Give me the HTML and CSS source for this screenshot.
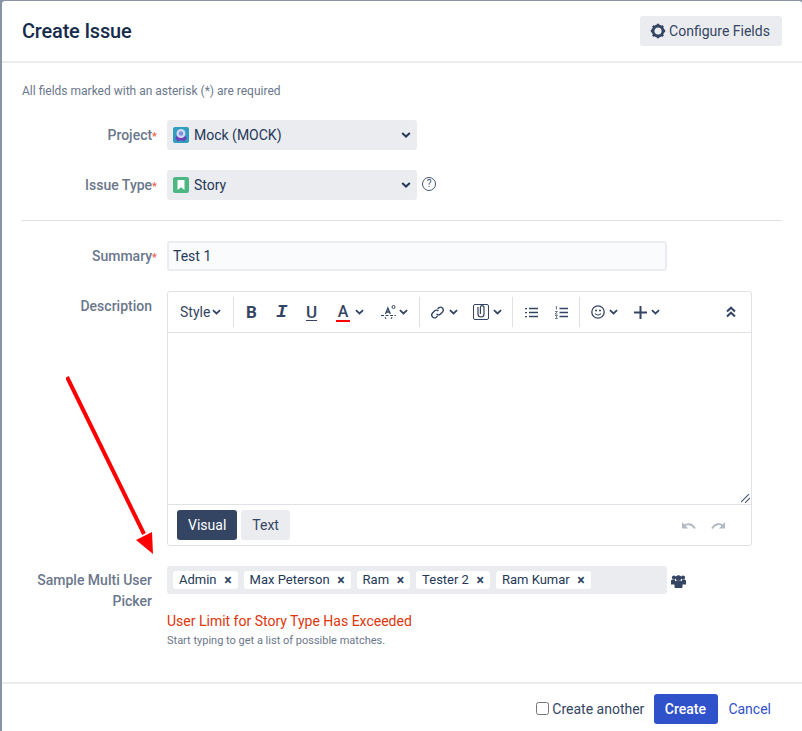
FILE: index.html
```html
<!DOCTYPE html>
<html>
<head>
    <title>Create Issue</title>
    <link rel="stylesheet" href="styles.css">
</head>
<body>
    <div class="dialog">
        <div class="dialog-header">
            <h2>Create Issue</h2>
            <button class="config-btn" type="button">
                <svg width="16" height="16" viewBox="0 0 16 16"><circle cx="8" cy="8" r="5" fill="none" stroke="#344563" stroke-width="2.8"/><path d="M6.800 .8h2.400v2.600H6.800zM6.800 12.600h2.400v2.600H6.800zM.8 6.800h2.600v2.400H.8zM12.600 6.800h2.600v2.400h-2.600zM2 3.700L3.700 2l1.800 1.800L3.800 5.500zM10.500 12.200l1.700-1.700 1.800 1.800-1.700 1.700zM2 12.300l1.800-1.800 1.700 1.700L3.700 14zM10.500 3.800L12.300 2 14 3.700l-1.800 1.800z" fill="#344563"/></svg>
                Configure Fields
            </button>
        </div>

        <div class="dialog-body">
            <p class="required-note">All fields marked with an asterisk (*) are required</p>

            <div class="form-row project-row">
                <label>Project<span class="req">*</span></label>
                <div class="fake-select">
                    <svg class="type-icon" width="16" height="16" viewBox="0 0 16 16"><rect width="16" height="16" rx="2" fill="#2f9fbd"/><path d="M2.500 11c0-2 2-3 5.500-3s5.500 1 5.500 3c0 1.500-1 2.500-2 2.500v1h-1.500v-1h-4v1H4.500v-1c-1 0-2-1-2-2.500z" fill="#6b45b5"/><circle cx="8" cy="6.500" r="4.500" fill="#cfd8f5"/><circle cx="8" cy="6.500" r="2.200" fill="#7f8fd8"/></svg>
                    <span>Mock (MOCK)</span>
                    <svg class="caret" width="10" height="6" viewBox="0 0 10 6"><path d="M1.200 1l3.800 3.600L8.800 1" fill="none" stroke="#253858" stroke-width="2"/></svg>
                </div>
            </div>

            <div class="form-row type-row">
                <label>Issue Type<span class="req">*</span></label>
                <div class="fake-select">
                    <svg class="type-icon" width="16" height="16" viewBox="0 0 16 16"><rect width="16" height="16" rx="2" fill="#4cb782"/><path d="M4.500 3h7v10L8 10.200 4.500 13z" fill="#fff"/></svg>
                    <span>Story</span>
                    <svg class="caret" width="10" height="6" viewBox="0 0 10 6"><path d="M1.200 1l3.800 3.600L8.800 1" fill="none" stroke="#253858" stroke-width="2"/></svg>
                </div>
                <span class="help-icon">?</span>
            </div>

            <hr class="divider">

            <div class="form-row summary-row">
                <label>Summary<span class="req">*</span></label>
                <input class="text-input" type="text" value="Test 1">
            </div>

            <div class="form-row description-row">
                <label class="label-top">Description</label>
                <div class="editor">
                    <div class="toolbar">
                        <div class="tool-group style-group">
                            <span class="style-btn">Style</span>
                            <svg class="chev" width="9" height="6" viewBox="0 0 10 6"><path d="M1 1l4 3.600L9 1" fill="none" stroke="#344563" stroke-width="2"/></svg>
                        </div>
                        <div class="tool-group format-group">
                            <span class="tool bold">B</span>
                            <span class="tool italic">I</span>
                            <span class="tool under">U</span>
                            <span class="tool color">A</span>
                            <svg class="chev color-chev" width="9" height="6" viewBox="0 0 10 6"><path d="M1 1l4 3.600L9 1" fill="none" stroke="#344563" stroke-width="2"/></svg>
                            <svg class="more-fmt" width="16" height="16" viewBox="0 0 16 16"><path d="M4.500 10l2.400-6 2.400 6M5.500 8h3" fill="none" stroke="#344563" stroke-width="1.300"/><circle cx="12.500" cy="3" r="1.500" fill="none" stroke="#344563"/><path d="M0 11.500h15" stroke="#344563" stroke-dasharray="3 1.500"/><path d="M4 13l1 2M11 13l-1 2" stroke="#344563"/></svg>
                            <svg class="chev" width="9" height="6" viewBox="0 0 10 6"><path d="M1 1l4 3.600L9 1" fill="none" stroke="#344563" stroke-width="2"/></svg>
                        </div>
                        <div class="tool-group link-group">
                            <svg width="15" height="15" viewBox="0 0 16 16"><path d="M7 9.500a3 3 0 0 0 4.200 0l2.300-2.300a3 3 0 0 0-4.200-4.200L8 4.300M9 6.500a3 3 0 0 0-4.200 0L2.500 8.800A3 3 0 0 0 6.700 13L8 11.700" fill="none" stroke="#344563" stroke-width="1.500"/></svg>
                            <svg class="chev" width="9" height="6" viewBox="0 0 10 6"><path d="M1 1l4 3.600L9 1" fill="none" stroke="#344563" stroke-width="2"/></svg>
                            <svg class="attach" width="16" height="16" viewBox="0 0 16 16"><rect x=".5" y=".5" width="15" height="15" rx="1.500" fill="none" stroke="#344563"/><path d="M5 3v7a3 3 0 0 0 6 0V3.500a1.800 1.800 0 0 0-3.600 0V10" fill="none" stroke="#344563" stroke-width="1.200"/></svg>
                            <svg class="chev" width="9" height="6" viewBox="0 0 10 6"><path d="M1 1l4 3.600L9 1" fill="none" stroke="#344563" stroke-width="2"/></svg>
                        </div>
                        <div class="tool-group list-group">
                            <svg width="13" height="11" viewBox="0 0 13 11"><path d="M4 1.500h9M4 5.500h9M4 9.500h9" stroke="#344563" stroke-width="1.500"/><path d="M0 1h2v1.200H0zM0 5h2v1.200H0zM0 9h2v1.200H0z" fill="#344563"/></svg>
                            <svg width="13" height="13" viewBox="0 0 13 13"><path d="M4.500 2.500H13M4.500 6.500H13M4.500 10.500H13" stroke="#344563" stroke-width="1.500"/><path d="M.5 1L1.500.5v3M0 5.500h2.500L0 8h2.500M0 9.500h2.500L1 11l1.500 1.500H0" fill="none" stroke="#344563" stroke-width=".7"/></svg>
                        </div>
                        <div class="tool-group insert-group">
                            <svg width="14" height="14" viewBox="0 0 14 14"><circle cx="7" cy="7" r="6.200" fill="none" stroke="#344563" stroke-width="1.300"/><circle cx="5" cy="5.500" r="1" fill="#344563"/><circle cx="9" cy="5.500" r="1" fill="#344563"/><path d="M4 8.500c1.500 2 4.500 2 6 0" fill="none" stroke="#344563" stroke-width="1.100"/></svg>
                            <svg class="chev" width="9" height="6" viewBox="0 0 10 6"><path d="M1 1l4 3.600L9 1" fill="none" stroke="#344563" stroke-width="2"/></svg>
                            <svg class="plus" width="13" height="13" viewBox="0 0 13 13"><path d="M6.500 0v13M0 6.500h13" stroke="#344563" stroke-width="2"/></svg>
                            <svg class="chev" width="9" height="6" viewBox="0 0 10 6"><path d="M1 1l4 3.600L9 1" fill="none" stroke="#344563" stroke-width="2"/></svg>
                        </div>
                        <svg class="collapse" width="10" height="12" viewBox="0 0 10 12"><path d="M1 5.500l4-3.800 4 3.800M1 10.500l4-3.800 4 3.800" fill="none" stroke="#344563" stroke-width="2"/></svg>
                    </div>
                    <div class="edit-area">
                        <svg class="grip" width="9" height="9" viewBox="0 0 9 9"><path d="M0 8l8-8M4 9l5-5" stroke="#505f79" stroke-width="1.100"/></svg>
                    </div>
                    <div class="editor-foot">
                        <span class="mode-btn active">Visual</span>
                        <span class="mode-btn">Text</span>
                        <div class="history">
                            <svg width="15" height="9" viewBox="0 0 15 9"><path d="M14 7.500C11 2.500 6 2 2.500 5" fill="none" stroke="#b3bac5" stroke-width="1.800"/><path d="M1 1v6.500h6z" fill="#b3bac5"/></svg>
                            <svg width="15" height="9" viewBox="0 0 15 9"><path d="M1 7.500C4 2.500 9 2 12.500 5" fill="none" stroke="#b3bac5" stroke-width="1.800"/><path d="M14 1v6.500H8z" fill="#b3bac5"/></svg>
                        </div>
                    </div>
                </div>
            </div>

            <div class="form-row picker-row">
                <label class="label-top">Sample Multi User Picker</label>
                <div class="picker-col">
                    <div class="picker-line">
                        <div class="picker">
                            <span class="chip">Admin<i>×</i></span>
                            <span class="chip">Max Peterson<i>×</i></span>
                            <span class="chip">Ram<i>×</i></span>
                            <span class="chip">Tester 2<i>×</i></span>
                            <span class="chip">Ram Kumar<i>×</i></span>
                        </div>
                        <svg class="people" width="15" height="14" viewBox="0 0 15 14"><circle cx="3" cy="3.500" r="2.100" fill="#344563"/><circle cx="12" cy="3.500" r="2.100" fill="#344563"/><circle cx="7.500" cy="4" r="2.800" fill="#344563"/><path d="M0 7c0-1 1-1.500 2-1.500h2v5H0zM11 5.500h2c1 0 2 .5 2 1.500v3.500h-4z" fill="#344563"/><path d="M3.500 9c0-1.500 1-2.500 2-2.500h4c1 0 2 1 2 2.500v4c0 .5-.5 1-1 1h-6c-.5 0-1-.5-1-1z" fill="#344563"/></svg>
                    </div>
                    <div class="field-error">User Limit for Story Type Has Exceeded</div>
                    <div class="field-hint">Start typing to get a list of possible matches.</div>
                </div>
            </div>
        </div>

        <div class="dialog-footer">
            <label class="create-another"><input type="checkbox">Create another</label>
            <button class="create-btn" type="button">Create</button>
            <a class="cancel-link" href="#">Cancel</a>
        </div>

        <svg class="arrow" width="110" height="190" viewBox="0 0 110 190">
            <path d="M1 1L78 158" stroke="#ff0000" stroke-width="4" fill="none"/>
            <path d="M87 178L70 164L86 156z" fill="#ff0000"/>
        </svg>
    </div>
</body>
</html>
```

FILE: styles.css
```css
html, body {
    height: 100%;
}
body {
    margin: 0;
    padding: 1px 0 0 2px;
    box-sizing: border-box;
    height: 731px;
    overflow: hidden;
    background-color: #8993a4;
    font-family: Roboto, sans-serif;
    font-size: 14px;
    color: #253858;
}
.dialog {
    position: relative;
    height: 730px;
    background-color: white;
    border-radius: 3px 3px 0 0;
    display: flex;
    flex-direction: column;
}
.dialog-header {
    height: 60px;
    flex: none;
    display: flex;
    align-items: center;
    justify-content: space-between;
    padding: 0 20px;
    border-bottom: 2px solid #ebecf0;
}
.dialog-header h2 {
    margin: 0;
    font-size: 20px;
    font-weight: 500;
    letter-spacing: -0.2px;
    color: #172b4d;
}
.config-btn {
    width: 142px;
    height: 30px;
    border: none;
    border-radius: 3px;
    background-color: #ebecf0;
    color: #344563;
    font-family: inherit;
    font-size: 14px;
    display: flex;
    align-items: center;
    justify-content: center;
    gap: 3px;
    padding: 0 2px 0 0;
}
.dialog-body {
    flex: 1;
    padding: 0 20px;
}
.required-note {
    margin: 21px 0 0;
    height: 15px;
    line-height: 15px;
    font-size: 12px;
    color: #6b778c;
}
.form-row {
    display: flex;
    align-items: center;
}
.form-row label {
    width: 130px;
    margin-right: 15px;
    flex: none;
    text-align: right;
    color: #6b778c;
    font-weight: 500;
    font-size: 14px;
}
.req {
    color: #ef5c48;
    font-size: 11px;
    margin-right: -5px;
}
.project-row {
    margin-top: 21px;
}
.type-row {
    margin-top: 20px;
}
.fake-select {
    width: 250px;
    height: 30px;
    box-sizing: border-box;
    padding: 0 6px;
    background-color: #ebecf0;
    border-radius: 3px;
    display: flex;
    align-items: center;
    color: #253858;
}
.type-icon {
    margin-right: 5px;
}
.caret {
    margin-left: auto;
}
.help-icon {
    width: 12px;
    height: 12px;
    margin: -2px 0 0 5px;
    border: 1.300px solid #42526e;
    border-radius: 50%;
    color: #42526e;
    font-size: 10px;
    line-height: 12px;
    text-align: center;
}
.divider {
    margin: 20px 0 0;
    border: none;
    border-top: 1px solid #dfe1e6;
}
.summary-row {
    margin-top: 20px;
}
.text-input {
    width: 500px;
    height: 30px;
    box-sizing: border-box;
    padding: 0 4px;
    border: 2px solid #ebecf0;
    border-radius: 3px;
    background-color: #fafbfc;
    font-family: inherit;
    font-size: 14px;
    color: #253858;
}
.description-row {
    margin-top: 20px;
    align-items: flex-start;
}
.label-top {
    padding-top: 7px;
}
.editor {
    width: 585px;
    height: 255px;
    box-sizing: border-box;
    border: 1px solid #dfe1e6;
    border-radius: 3px;
    display: flex;
    flex-direction: column;
}
.toolbar {
    height: 41px;
    flex: none;
    box-sizing: border-box;
    border-bottom: 1px solid #dfe1e6;
    display: flex;
    align-items: center;
    padding-right: 15px;
}
.tool-group {
    height: 30px;
    display: flex;
    align-items: center;
    border-right: 1px solid #dfe1e6;
    box-sizing: border-box;
}
.style-group {
    width: 66px;
    padding-left: 12px;
    gap: 2px;
}
.style-btn {
    color: #344563;
    font-size: 14px;
}
.format-group {
    width: 186px;
    padding-left: 12px;
}
.tool {
    width: 30px;
    flex: none;
    color: #344563;
    font-size: 17px;
    line-height: 20px;
}
.tool.bold {
    font-weight: 700;
}
.tool.italic {
    font-family: "Liberation Mono", monospace;
    font-style: italic;
    font-weight: 700;
    font-size: 19px;
}
.tool.under {
    text-decoration: underline;
    text-underline-offset: 2px;
    font-weight: 500;
}
.tool.color {
    width: 14px;
    font-size: 16px;
    font-weight: 500;
    border-bottom: 2px solid #ff0000;
    line-height: 17px;
    margin-right: 5px;
    text-align: center;
}
.more-fmt {
    margin-left: 17px;
    margin-right: 2px;
}
.link-group {
    width: 93px;
    padding-left: 10px;
    gap: 4px;
}
.attach {
    margin-left: 11px;
}
.list-group {
    width: 67px;
    padding-left: 12px;
    gap: 17px;
}
.insert-group {
    border-right: none;
    padding-left: 11px;
    gap: 4px;
}
.plus {
    margin-left: 12px;
}
.collapse {
    margin-left: auto;
}
.edit-area {
    flex: 1;
    position: relative;
}
.grip {
    position: absolute;
    right: 1px;
    bottom: 1px;
}
.editor-foot {
    height: 41px;
    flex: none;
    box-sizing: border-box;
    border-top: 1px solid #dfe1e6;
    display: flex;
    align-items: center;
    padding: 0 25px 0 9px;
    gap: 4px;
}
.mode-btn {
    height: 30px;
    padding: 0 11px;
    line-height: 30px;
    border-radius: 3px;
    background-color: #ebecf0;
    color: #344563;
}
.mode-btn.active {
    background-color: #344563;
    color: white;
}
.history {
    margin-left: auto;
    display: flex;
    gap: 15px;
}
.picker-row {
    margin-top: 20px;
    align-items: flex-start;
}
.picker-row label {
    line-height: 21px;
    padding-top: 4px;
}
.picker-line {
    display: flex;
    align-items: center;
}
.picker {
    width: 500px;
    height: 28px;
    box-sizing: border-box;
    padding: 0 6px;
    background-color: #ebecf0;
    border-radius: 3px;
    display: flex;
    align-items: center;
    gap: 6px;
}
.chip {
    height: 18px;
    padding: 0 6px;
    background-color: white;
    border-radius: 3px;
    font-size: 13px;
    line-height: 18px;
    color: #253858;
    display: flex;
    align-items: center;
}
.chip i {
    font-style: normal;
    font-weight: 700;
    font-size: 14px;
    margin-left: 7.6px;
    color: #344563;
}
.people {
    margin-left: 4px;
    margin-top: 2px;
}
.field-error {
    margin-top: 18px;
    color: #de350b;
    font-size: 14px;
    line-height: 18px;
}
.field-hint {
    margin-top: 3px;
    color: #6b778c;
    font-size: 11px;
    line-height: 16px;
}
.dialog-footer {
    height: 49px;
    flex: none;
    box-sizing: border-box;
    border-top: 2px solid #ebecf0;
    display: flex;
    align-items: center;
    justify-content: flex-end;
    padding: 3px 31px 0 0;
}
.create-another {
    display: flex;
    align-items: center;
    color: #344563;
    font-size: 14px;
    margin-right: 10px;
}
.create-another input {
    margin: 0 3px 2px 0;
    width: 13px;
    height: 13px;
}
.create-btn {
    width: 64px;
    height: 30px;
    border: none;
    border-radius: 3px;
    background-color: #2f51c9;
    color: white;
    font-family: inherit;
    font-size: 14px;
    font-weight: 500;
    padding: 0 2px 0 0;
}
.cancel-link {
    margin-left: 10px;
    color: #2f51c9;
    text-decoration: none;
}
.arrow {
    position: absolute;
    left: 64px;
    top: 375px;
}
```
